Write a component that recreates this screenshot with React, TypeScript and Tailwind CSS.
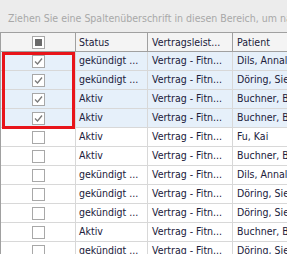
import React from "react";

type Row = { checked: boolean; status: string; patient: string };

const rows: Row[] = [
  { checked: true, status: "gekündigt ...", patient: "Dils, Annalena" },
  { checked: true, status: "gekündigt ...", patient: "Döring, Sieglinde" },
  { checked: true, status: "Aktiv", patient: "Buchner, Bernd" },
  { checked: true, status: "Aktiv", patient: "Buchner, Bernd" },
  { checked: false, status: "Aktiv", patient: "Fu, Kai" },
  { checked: false, status: "Aktiv", patient: "Buchner, Bernd" },
  { checked: false, status: "gekündigt ...", patient: "Dils, Annalena" },
  { checked: false, status: "gekündigt ...", patient: "Döring, Sieglinde" },
  { checked: false, status: "gekündigt ...", patient: "Döring, Sieglinde" },
  { checked: false, status: "Aktiv", patient: "Buchner, Bernd" },
  { checked: false, status: "gekündigt ...", patient: "Döring, Sieglinde" },
];

function CheckBox({ checked, header }: { checked?: boolean; header?: boolean }) {
  return (
    <div className="w-[13px] h-[13px] border border-[#a8a8a8] bg-white flex items-center justify-center">
      {header && <div className="w-[7px] h-[7px] bg-[#6a6a6a]" />}
      {checked && (
        <svg width="11" height="11" viewBox="0 0 11 11">
          <path d="M2 5.5 L4.5 8 L9 2.5" fill="none" stroke="#7a7a7a" strokeWidth="1.3" />
        </svg>
      )}
    </div>
  );
}

export default function App() {
  return (
    <div
      className="relative w-[287px] h-[254px] overflow-hidden bg-white text-[10.5px] text-[#20203a]"
      style={{ fontFamily: "Tahoma, 'DejaVu Sans Condensed', 'DejaVu Sans', sans-serif" }}
    >
      {/* group panel */}
      <div className="h-[33px] bg-[#ececec] border-b border-[#a0a0a0] flex items-center pl-[8px] pt-[5px] whitespace-nowrap overflow-hidden text-[#a8a8a8]">
        Ziehen Sie eine Spaltenüberschrift in diesen Bereich, um nach dieser Spalte zu gruppieren
      </div>

      <div className="border-l border-[#a0a0a0]">
        {/* header */}
        <div className="flex h-[19px] bg-[#f4f4f4] border-b border-[#a0a0a0] whitespace-nowrap">
          <div className="w-[75px] shrink-0 border-r border-[#a0a0a0] flex items-center justify-center">
            <CheckBox header />
          </div>
          <div className="w-[72px] shrink-0 border-r border-[#a0a0a0] flex items-center pl-[3px] pt-[1px]">Status</div>
          <div className="w-[85px] shrink-0 border-r border-[#a0a0a0] flex items-center pl-[4px] pt-[1px]">Vertragsleist...</div>
          <div className="flex-1 flex items-center pl-[4px] pt-[1px] overflow-hidden">Patient</div>
        </div>

        {rows.map((r, i) => (
          <div
            key={i}
            className={`flex h-[19px] border-b border-[#d8d8d8] whitespace-nowrap ${r.checked ? "bg-[#e6f0fa]" : "bg-white"}`}
          >
            <div className="w-[75px] shrink-0 border-r border-[#d8d8d8] flex items-center justify-center">
              <CheckBox checked={r.checked} />
            </div>
            <div className="w-[72px] shrink-0 border-r border-[#d8d8d8] flex items-center pl-[3px] overflow-hidden">{r.status}</div>
            <div className="w-[85px] shrink-0 border-r border-[#d8d8d8] flex items-center pl-[4px] overflow-hidden">Vertrag - Fitn...</div>
            <div className="flex-1 flex items-center pl-[4px] overflow-hidden">{r.patient}</div>
          </div>
        ))}
      </div>

      {/* selection highlight */}
      <div className="absolute left-[2px] top-[52px] w-[73px] h-[77px] border-[3px] border-[#e8141a]" />
    </div>
  );
}
